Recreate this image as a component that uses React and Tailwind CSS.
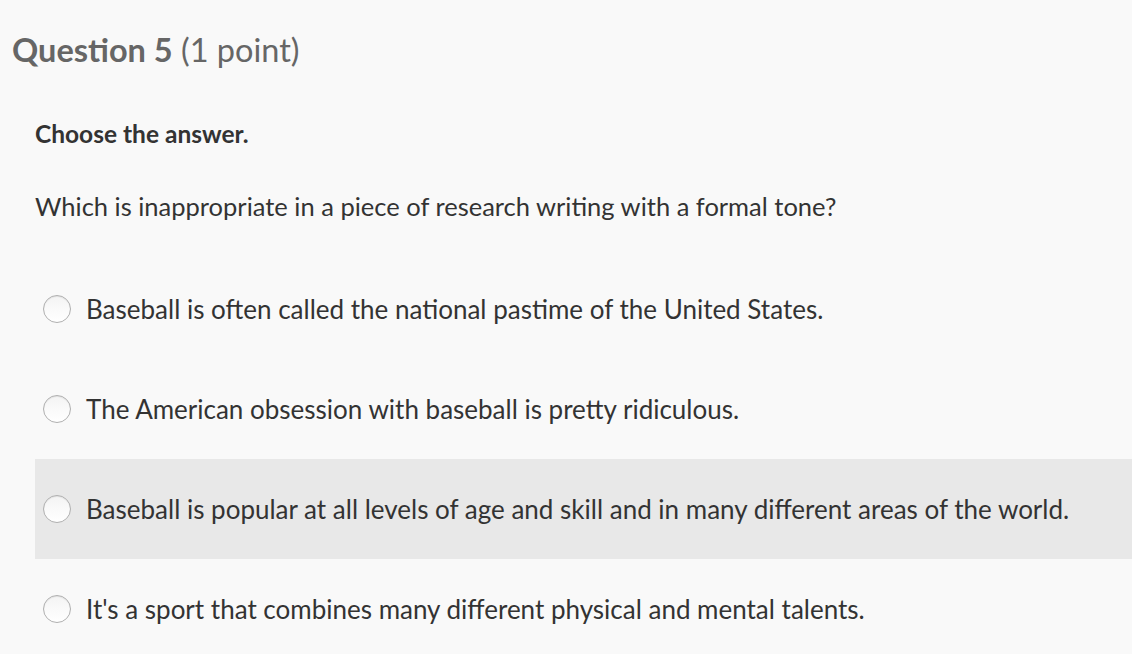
import React from "react";

const options = [
  "Baseball is often called the national pastime of the United States.",
  "The American obsession with baseball is pretty ridiculous.",
  "Baseball is popular at all levels of age and skill and in many different areas of the world.",
  "It's a sport that combines many different physical and mental talents.",
];

export default function App() {
  return (
    <div className="w-[1132px] h-[654px] bg-[#f9f9f9] overflow-hidden" style={{ fontFamily: "Lato, 'Open Sans', sans-serif" }}>
      <div className="pl-[12px] pt-[28px] text-[32.5px] leading-[44px] text-[#666]">
        <span className="font-bold">Question 5</span> (1 point)
      </div>
      <div className="pl-[35px]">
        <div className="mt-[47px] text-[24.5px] leading-[30px] font-bold text-[#333]">Choose the answer.</div>
        <div className="mt-[42px] text-[25.5px] leading-[30px] text-[#333]">Which is inappropriate in a piece of research writing with a formal tone?</div>
        <div className="mt-[38px]">
          {options.map((o, i) => (
            <div key={i} className={`h-[100px] flex items-center ${i === 2 ? "bg-[#e8e8e8]" : ""}`}>
              <span className="ml-[8px] w-[28px] h-[28px] rounded-full bg-gradient-to-b from-[#f4f4f4] to-white border border-[#b0b0b0] shadow-[inset_0_1px_1px_rgba(0,0,0,0.08)] shrink-0" />
              <span className="ml-[15px] text-[26px] leading-[30px] text-[#333]">{o}</span>
            </div>
          ))}
        </div>
      </div>
    </div>
  );
}
